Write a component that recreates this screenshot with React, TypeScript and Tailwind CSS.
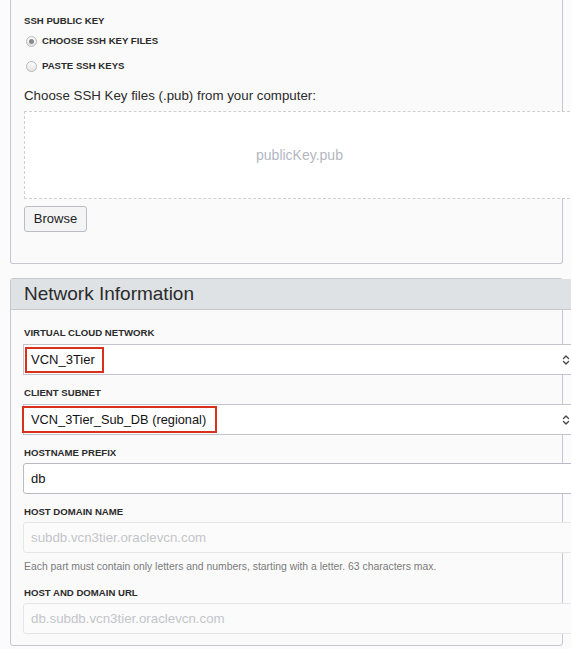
const font = { fontFamily: '"Liberation Sans", Arial, sans-serif' };

const Label = ({ children, className = '' }: { children: React.ReactNode; className?: string }) => (
    <div className={`text-[9.6px] font-bold leading-[12px] uppercase text-[#2b2b2b] ${className}`}>{children}</div>
);

const Chevrons = () => (
    <svg width="8" height="12" viewBox="0 0 8 12" className="absolute right-[3px] top-1/2 -translate-y-1/2">
        <path d="M1.5 4.5 L4 2 L6.5 4.5" fill="none" stroke="#444" strokeWidth="1.3" strokeLinecap="round" strokeLinejoin="round" />
        <path d="M1.5 7.5 L4 10 L6.5 7.5" fill="none" stroke="#444" strokeWidth="1.3" strokeLinecap="round" strokeLinejoin="round" />
    </svg>
);

const Radio = ({ checked }: { checked?: boolean }) => (
    <span className="flex h-[11px] w-[11px] items-center justify-center rounded-full border border-[#b8b8b8] bg-gradient-to-b from-[#fdfdfd] to-[#e4e4e4]">
        {checked && <span className="h-[5px] w-[5px] rounded-full bg-[#8a8a8a]" />}
    </span>
);

const App = () => {
    return (
        <div className="h-[649px] w-[571px] overflow-hidden bg-[#fbfbfb] text-[#333]" style={font}>
            {/* SSH key panel (top cut off) */}
            <div className="ml-[10px] w-[553px] rounded-b-[3px] border-x border-b border-[#c6c7d1] bg-[#fafafa] pb-[31px] pl-[13px] pt-[15px]">
                <Label>SSH Public Key</Label>
                <div className="mt-[7px] flex h-[14px] items-center gap-[5px] pl-[2px]">
                    <Radio checked />
                    <span className="text-[9.6px] font-bold text-[#2b2b2b]">CHOOSE SSH KEY FILES</span>
                </div>
                <div className="mt-[11px] flex h-[14px] items-center gap-[5px] pl-[2px]">
                    <Radio />
                    <span className="text-[9.6px] font-bold text-[#2b2b2b]">PASTE SSH KEYS</span>
                </div>
                <div className="mt-[14px] text-[13.3px] leading-[18px] text-[#2b2b2b]">Choose SSH Key files (.pub) from your computer:</div>
                <div className="mt-[6px] flex h-[88px] w-[551px] items-center justify-center border border-dashed border-[#cfd0d4] bg-white">
                    <span className="text-[14px] text-[#b3b7bf]">publicKey.pub</span>
                </div>
                <button className="mt-[7px] flex h-[26px] w-[63px] items-center justify-center rounded-[3px] border border-[#b9bcc4] bg-[#f4f4f5] text-[13px] text-[#222]">
                    Browse
                </button>
            </div>

            {/* Network Information panel */}
            <div className="ml-[10px] mt-[14px] w-[553px] rounded-[3px] border border-[#c6c7d1] bg-[#fafafa] pb-[11px]">
                <div className="flex h-[31px] w-[561px] items-center border-b border-[#c6c8cc] bg-[#dfe2e5] pl-[13px]">
                    <h2 className="text-[19px] text-[#2b2b2b]">Network Information</h2>
                </div>
                <div className="pl-[12px]">
                    <Label className="ml-[1px] mt-[17px]">Virtual Cloud Network</Label>
                    <div className="relative mt-[5px] flex h-[31px] w-[551px] items-center border border-[#c4c5cc] bg-white pl-[7px] text-[13px] text-[#111]">
                        VCN_3Tier
                        <span className="absolute left-[1px] top-[2px] h-[26px] w-[79px] border-2 border-[#d8301b]" />
                        <Chevrons />
                    </div>
                    <Label className="ml-[1px] mt-[12px]">Client Subnet</Label>
                    <div className="relative mt-[5px] flex h-[31px] w-[551px] items-center border border-[#c4c5cc] bg-white pl-[7px] text-[12.8px] text-[#111]">
                        VCN_3Tier_Sub_DB (regional)
                        <span className="absolute left-[-2px] top-[1px] h-[27px] w-[195px] border-2 border-[#d8301b]" />
                        <Chevrons />
                    </div>
                    <Label className="ml-[1px] mt-[12px]">Hostname Prefix</Label>
                    <div className="mt-[4px] flex h-[31px] w-[551px] items-center rounded-[3px] border border-[#b9bac2] bg-white pl-[7px] text-[13px] text-[#111]">
                        db
                    </div>
                    <Label className="ml-[1px] mt-[12px]">Host Domain Name</Label>
                    <div className="mt-[4px] flex h-[31px] w-[551px] items-center rounded-[3px] border border-[#e6e6e8] bg-[#fbfbfb] pl-[7px] text-[13.3px] text-[#c3c5ca]">
                        subdb.vcn3tier.oraclevcn.com
                    </div>
                    <div className="ml-[1px] mt-[8px] text-[10.4px] leading-[12px] text-[#7b7b7b]">
                        Each part must contain only letters and numbers, starting with a letter. 63 characters max.
                    </div>
                    <Label className="ml-[1px] mt-[14px]">Host and Domain URL</Label>
                    <div className="mt-[4px] flex h-[31px] w-[551px] items-center rounded-[3px] border border-[#e6e6e8] bg-[#fbfbfb] pl-[7px] text-[13.3px] text-[#c3c5ca]">
                        db.subdb.vcn3tier.oraclevcn.com
                    </div>
                </div>
            </div>
        </div>
    );
};

export default App;
